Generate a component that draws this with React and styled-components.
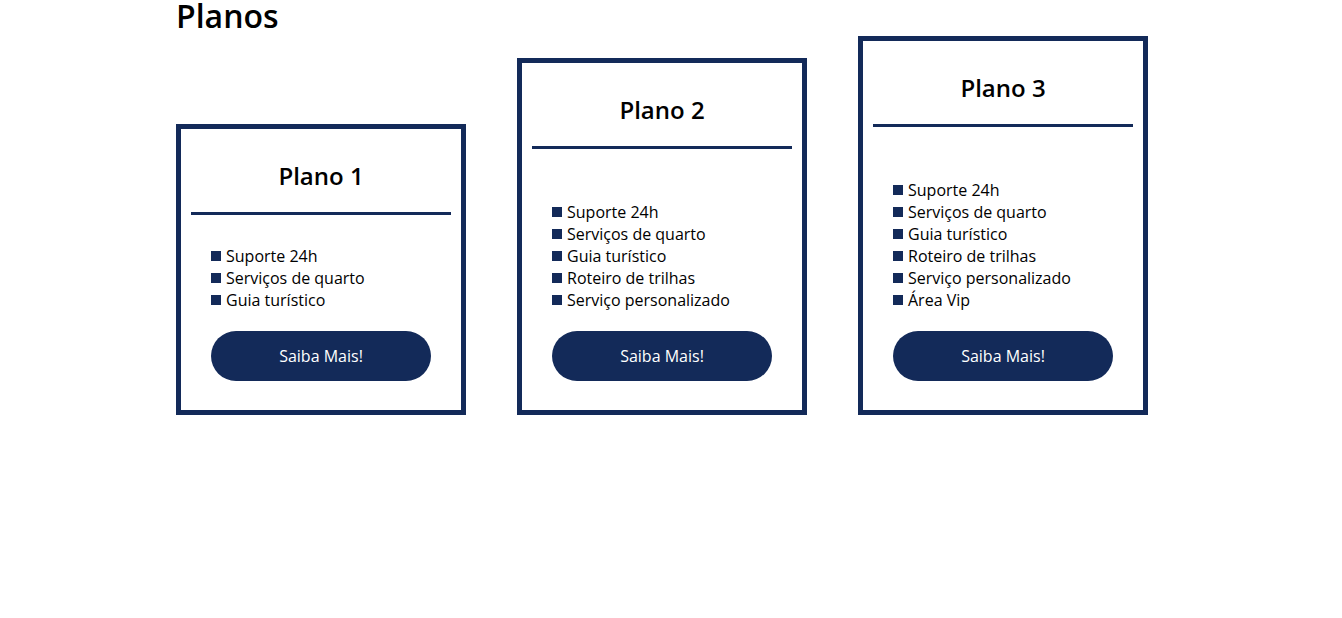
import React from 'react'
import styled, { createGlobalStyle } from 'styled-components'

const navy = '#132a59'

const GlobalStyle = createGlobalStyle`
  body {
    margin: 0;
    background: #fff;
    font-family: "Open Sans", "Liberation Sans", sans-serif;
    color: #000;
  }
`

const Page = styled.section`
  padding-left: 176px;
`

const Title = styled.h1`
  margin: 0;
  font-size: 32px;
  line-height: 32px;
  font-weight: 600;
`

const Row = styled.div`
  display: flex;
  align-items: flex-end;
  gap: 51px;
  margin-top: 4px;
`

const Card = styled.div`
  width: 290px;
  box-sizing: border-box;
  border: 5px solid ${navy};
  padding: 10px 10px 29px;
  display: flex;
  flex-direction: column;
`

const CardTitle = styled.h2`
  margin: 20px 0 0;
  font-size: 24px;
  line-height: 33px;
  font-weight: 600;
  text-align: center;
`

const Rule = styled.hr`
  margin: 20px 0 0;
  border: 0;
  height: 3px;
  background: ${navy};
`

const List = styled.ul`
  list-style: none;
  margin: ${p => p.$offset}px 0 0;
  padding: 0 0 0 20px;
`

const Item = styled.li`
  display: flex;
  align-items: center;
  font-size: 16px;
  line-height: 22px;

  &::before {
    content: '';
    width: 10px;
    height: 10px;
    margin-right: 5px;
    background: ${navy};
    flex-shrink: 0;
  }
`

const Button = styled.button`
  align-self: center;
  margin-top: 20px;
  width: 220px;
  height: 50px;
  border: 0;
  border-radius: 25px;
  background: ${navy};
  color: #fff;
  font-family: inherit;
  font-size: 16px;
  cursor: pointer;
`

const all = [
  'Suporte 24h',
  'Serviços de quarto',
  'Guia turístico',
  'Roteiro de trilhas',
  'Serviço personalizado',
  'Área Vip',
]

const plans = [
  { name: 'Plano 1', count: 3, offset: 30 },
  { name: 'Plano 2', count: 5, offset: 52 },
  { name: 'Plano 3', count: 6, offset: 52 },
]

export default function App() {
  return (
    <>
      <GlobalStyle />
      <Page>
        <Title>Planos</Title>
        <Row>
          {plans.map(plan => (
            <Card key={plan.name}>
              <CardTitle>{plan.name}</CardTitle>
              <Rule />
              <List $offset={plan.offset}>
                {all.slice(0, plan.count).map(item => (
                  <Item key={item}>{item}</Item>
                ))}
              </List>
              <Button type="button">Saiba Mais!</Button>
            </Card>
          ))}
        </Row>
      </Page>
    </>
  )
}
